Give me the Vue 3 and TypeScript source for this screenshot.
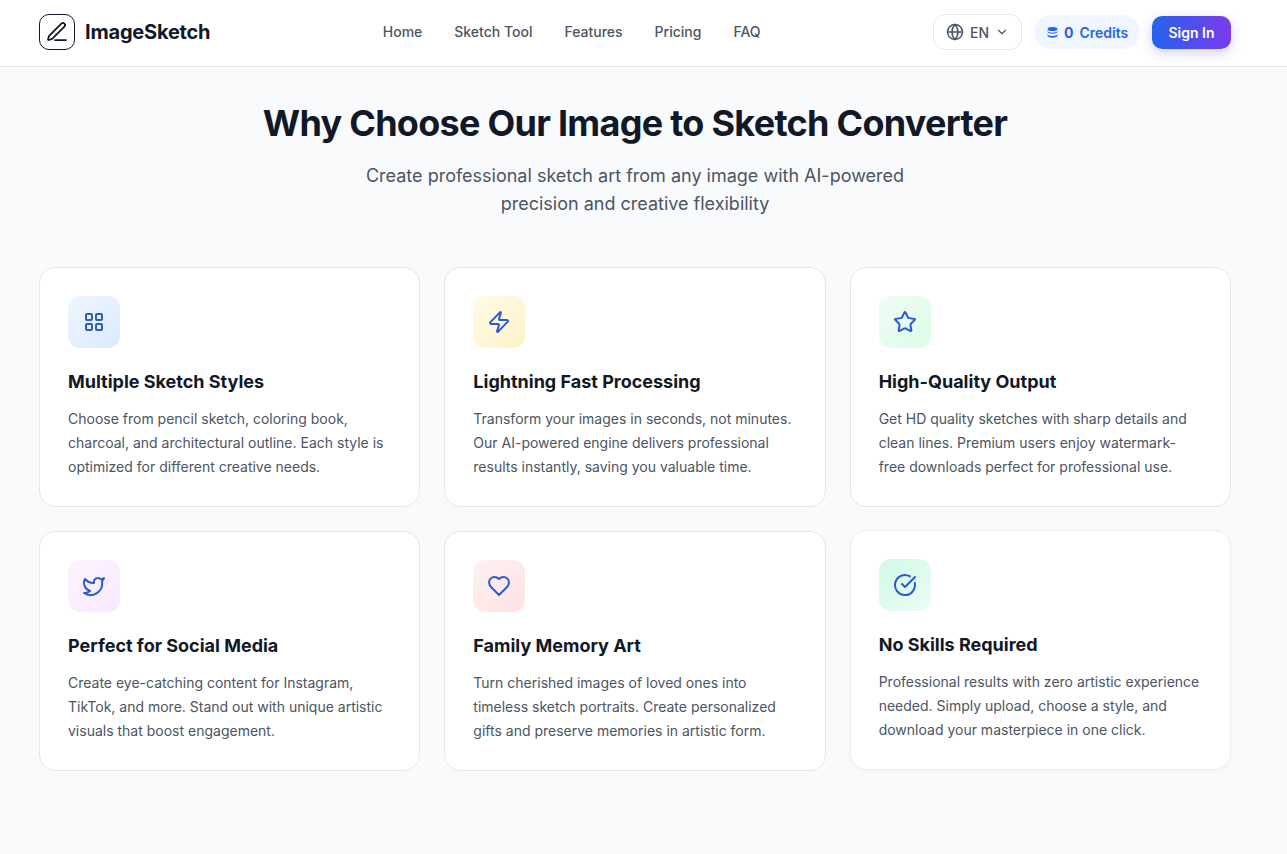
<script setup lang="ts">
type Feature = {
  title: string;
  lines: string[];
  tint: string;
  stroke: string;
  paths: string[];
  lifted?: boolean;
};

const navLinks = ["Home", "Sketch Tool", "Features", "Pricing", "FAQ"];

const squares = [
  "M5 4h4a1 1 0 0 1 1 1v4a1 1 0 0 1-1 1H5a1 1 0 0 1-1-1V5a1 1 0 0 1 1-1z",
  "M15 4h4a1 1 0 0 1 1 1v4a1 1 0 0 1-1 1h-4a1 1 0 0 1-1-1V5a1 1 0 0 1 1-1z",
  "M15 14h4a1 1 0 0 1 1 1v4a1 1 0 0 1-1 1h-4a1 1 0 0 1-1-1v-4a1 1 0 0 1 1-1z",
  "M5 14h4a1 1 0 0 1 1 1v4a1 1 0 0 1-1 1H5a1 1 0 0 1-1-1v-4a1 1 0 0 1 1-1z",
];

const features: Feature[] = [
  {
    title: "Multiple Sketch Styles",
    lines: ["Choose from pencil sketch, coloring book,", "charcoal, and architectural outline. Each style is", "optimized for different creative needs."],
    tint: "tint-blue",
    stroke: "#2f5fb3",
    paths: squares,
  },
  {
    title: "Lightning Fast Processing",
    lines: ["Transform your images in seconds, not minutes.", "Our AI-powered engine delivers professional", "results instantly, saving you valuable time."],
    tint: "tint-yellow",
    stroke: "#2a5bd7",
    paths: ["M4 14a1 1 0 0 1-.78-1.63l9.9-10.2a.5.5 0 0 1 .86.46l-1.92 6.02A1 1 0 0 0 13 10h7a1 1 0 0 1 .78 1.63l-9.9 10.2a.5.5 0 0 1-.86-.46l1.92-6.02A1 1 0 0 0 11 14z"],
  },
  {
    title: "High-Quality Output",
    lines: ["Get HD quality sketches with sharp details and", "clean lines. Premium users enjoy watermark-", "free downloads perfect for professional use."],
    tint: "tint-green",
    stroke: "#2a5bd7",
    paths: ["M11.525 2.295a.53.53 0 0 1 .95 0l2.31 4.679a2.123 2.123 0 0 0 1.595 1.16l5.166.756a.53.53 0 0 1 .294.904l-3.736 3.638a2.123 2.123 0 0 0-.611 1.878l.882 5.14a.53.53 0 0 1-.771.56l-4.618-2.428a2.122 2.122 0 0 0-1.973 0L6.396 21.01a.53.53 0 0 1-.77-.56l.881-5.139a2.122 2.122 0 0 0-.611-1.879L2.16 9.795a.53.53 0 0 1 .294-.906l5.165-.755a2.122 2.122 0 0 0 1.597-1.16z"],
  },
  {
    title: "Perfect for Social Media",
    lines: ["Create eye-catching content for Instagram,", "TikTok, and more. Stand out with unique artistic", "visuals that boost engagement."],
    tint: "tint-pink",
    stroke: "#2a5bd7",
    paths: ["M22 4s-.7 2.1-2 3.4c1.6 10-9.4 17.3-18 11.6 2.2.1 4.4-.6 6-2C3 15.5.5 9.6 3 5c2.2 2.6 5.6 4.1 9 4-.9-4.2 4-6.6 7-3.8 1.1 0 3-1.2 3-1.2z"],
  },
  {
    title: "Family Memory Art",
    lines: ["Turn cherished images of loved ones into", "timeless sketch portraits. Create personalized", "gifts and preserve memories in artistic form."],
    tint: "tint-red",
    stroke: "#2a5bd7",
    paths: ["M19 14c1.49-1.46 3-3.21 3-5.5A5.5 5.5 0 0 0 16.5 3c-1.76 0-3 .5-4.5 2-1.5-1.5-2.74-2-4.5-2A5.5 5.5 0 0 0 2 8.5c0 2.3 1.5 4.05 3 5.5l7 7Z"],
  },
  {
    title: "No Skills Required",
    lines: ["Professional results with zero artistic experience", "needed. Simply upload, choose a style, and", "download your masterpiece in one click."],
    tint: "tint-mint",
    stroke: "#2a5bd7",
    paths: ["M21.801 10A10 10 0 1 1 17 3.335", "m9 11 3 3L22 4"],
    lifted: true,
  },
];
</script>

<template>
  <div class="page">
    <header class="topbar">
      <div class="brand">
        <span class="brand-mark">
          <svg width="24" height="24" viewBox="0 0 24 24" fill="none" stroke="#111827" stroke-width="1.75" stroke-linecap="round" stroke-linejoin="round">
            <path d="M10 20h11" />
            <path d="M16.376 3.622a1 1 0 0 1 3.002 3.002L7.368 18.635a2 2 0 0 1-.855.506l-2.872.838a.5.5 0 0 1-.62-.62l.838-2.872a2 2 0 0 1 .506-.854z" />
          </svg>
        </span>
        <span class="brand-name">ImageSketch</span>
      </div>

      <nav class="nav">
        <a v-for="link in navLinks" :key="link">{{ link }}</a>
      </nav>

      <div class="actions">
        <button class="lang">
          <svg width="18" height="18" viewBox="0 0 24 24" fill="none" stroke="currentColor" stroke-width="2" stroke-linecap="round" stroke-linejoin="round">
            <circle cx="12" cy="12" r="10" />
            <path d="M12 2a14.5 14.5 0 0 0 0 20 14.5 14.5 0 0 0 0-20" />
            <path d="M2 12h20" />
          </svg>
          <span>EN</span>
          <svg width="14" height="14" viewBox="0 0 24 24" fill="none" stroke="currentColor" stroke-width="2" stroke-linecap="round" stroke-linejoin="round">
            <path d="m6 9 6 6 6-6" />
          </svg>
        </button>
        <div class="credits">
          <svg width="11" height="11" viewBox="0 0 12 12" fill="currentColor">
            <ellipse cx="6" cy="2.2" rx="5.4" ry="2.2" />
            <path d="M.6 4v1.2c0 1.2 2.4 2.2 5.4 2.2s5.4-1 5.4-2.2V4c0 1.2-2.4 2.2-5.4 2.2S.6 5.2.6 4z" />
            <path d="M.6 7.6v1.6c0 1.4 2.4 2.4 5.4 2.4s5.4-1 5.4-2.4V7.6c0 1.2-2.4 2.2-5.4 2.2S.6 8.8.6 7.6z" />
          </svg>
          <strong>0</strong>
          <span>Credits</span>
        </div>
        <button class="signin">Sign In</button>
      </div>
    </header>

    <main class="content">
      <section class="hero">
        <h1>Why Choose Our Image to Sketch Converter</h1>
        <p>Create professional sketch art from any image with AI-powered precision and creative flexibility</p>
      </section>

      <section class="grid">
        <article v-for="item in features" :key="item.title" class="card" :class="{ lifted: item.lifted }">
          <div class="icon-box" :class="item.tint">
            <svg width="24" height="24" viewBox="0 0 24 24" fill="none" :stroke="item.stroke" stroke-width="2" stroke-linecap="round" stroke-linejoin="round">
              <path v-for="d in item.paths" :key="d" :d="d" />
            </svg>
          </div>
          <h3>{{ item.title }}</h3>
          <p>
            <span v-for="line in item.lines" :key="line">{{ line }}</span>
          </p>
        </article>
      </section>
    </main>
  </div>
</template>

<style>
body {
  background: #f9fafb;
}
</style>

<style scoped>
.page {
  min-height: 854px;
  background: #f9fafb;
  font-family: Inter, "Liberation Sans", sans-serif;
  color: #111827;
}

.topbar {
  height: 67px;
  box-sizing: border-box;
  padding: 0 56px 2px 39px;
  display: flex;
  align-items: center;
  justify-content: space-between;
  background: #fff;
  border-bottom: 1px solid #e5e7eb;
}

.brand {
  display: flex;
  align-items: center;
  gap: 10px;
}

.brand-mark {
  width: 36px;
  height: 36px;
  box-sizing: border-box;
  border: 1px solid #111827;
  border-radius: 10px;
  display: flex;
  align-items: center;
  justify-content: center;
}

.brand-name {
  font-size: 20px;
  font-weight: 700;
  line-height: 28px;
  letter-spacing: -0.2px;
}

.nav {
  display: flex;
  gap: 32px;
}

.nav a {
  font-size: 14px;
  font-weight: 500;
  line-height: 20px;
  color: #4b5563;
}

.actions {
  display: flex;
  align-items: center;
  gap: 12px;
}

.lang {
  width: 89px;
  height: 36px;
  box-sizing: border-box;
  display: flex;
  align-items: center;
  justify-content: center;
  gap: 6px;
  padding: 0;
  background: #fff;
  border: 1px solid #e5e7eb;
  border-radius: 12px;
  color: #4b5563;
  font: 500 14px Inter, sans-serif;
}

.credits {
  width: 106px;
  height: 34px;
  box-sizing: border-box;
  padding: 0 0 0 13px;
  display: flex;
  align-items: center;
  gap: 6px;
  background: #eff6ff;
  border-radius: 17px;
  color: #2563eb;
  font-size: 14px;
  font-weight: 600;
}

.credits strong {
  font-weight: 700;
}

.signin {
  width: 79px;
  height: 33px;
  padding: 0;
  border: none;
  border-radius: 10px;
  background: linear-gradient(90deg, #2563eb, #7c3aed);
  box-shadow: 0 4px 12px rgba(79, 70, 229, 0.25);
  color: #fff;
  font: 600 14px Inter, sans-serif;
}

.content {
  padding: 32px 56px 0 39px;
}

.hero {
  text-align: center;
  margin-bottom: 49px;
}

.hero h1 {
  margin: 0 0 15px;
  font-size: 36px;
  line-height: 48px;
  font-weight: 700;
  letter-spacing: -0.72px;
  color: #111827;
}

.hero p {
  width: 576px;
  margin: 0 auto;
  font-size: 18px;
  line-height: 28px;
  color: #4b5563;
}

.grid {
  display: grid;
  grid-template-columns: repeat(3, 1fr);
  gap: 24px;
}

.card {
  box-sizing: border-box;
  height: 240px;
  padding: 28px;
  background: #fff;
  border: 1px solid #e5e7eb;
  border-radius: 16px;
}

.lifted {
  transform: translateY(-1px);
  border-color: #eceef2;
  box-shadow: 0 1px 4px rgba(17, 24, 39, 0.03);
}

.icon-box {
  width: 52px;
  height: 52px;
  border-radius: 12px;
  display: flex;
  align-items: center;
  justify-content: center;
  margin-bottom: 20px;
}

.tint-blue { background: linear-gradient(135deg, #eff6ff, #dbeafe); }
.tint-yellow { background: linear-gradient(135deg, #fefce8, #fef3c7); }
.tint-green { background: linear-gradient(135deg, #f0fdf4, #dcfce7); }
.tint-pink { background: linear-gradient(135deg, #fdf4ff, #fae8ff); }
.tint-red { background: linear-gradient(135deg, #fef2f2, #fee2e2); }
.tint-mint { background: linear-gradient(135deg, #d1fae5, #ecfdf5); }

.card h3 {
  margin: 0 0 11px;
  font-size: 18px;
  line-height: 28px;
  font-weight: 700;
  color: #111827;
}

.card p {
  margin: 0;
  font-size: 14px;
  line-height: 24px;
  color: #4b5563;
}

.card p span {
  display: block;
  white-space: nowrap;
}
</style>
